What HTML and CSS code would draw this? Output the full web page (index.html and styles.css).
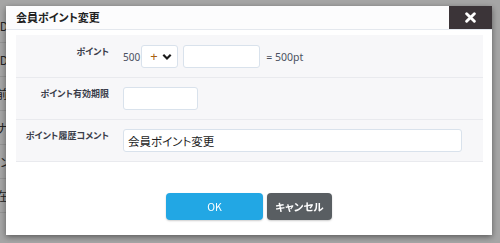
FILE: index.html
```html
<!DOCTYPE html>
<html lang="ja">
<head>
    <meta charset="UTF-8">
    <meta name="viewport" content="width=device-width, initial-scale=1.0">
    <title>会員ポイント変更</title>
    <link rel="stylesheet" href="styles.css">
</head>
<body>
    <!-- page behind the modal, only its left edge shows -->
    <div class="page">
        <div class="page-row">ID</div>
        <div class="page-row">ID</div>
        <div class="page-row">名前</div>
        <div class="page-row">カナ</div>
        <div class="page-row">ポイント</div>
        <div class="page-row">現在</div>
    </div>

    <div class="overlay">
        <div class="modal">
            <div class="modal-header">
                <span class="modal-title">会員ポイント変更</span>
                <button class="close-button" aria-label="閉じる">
                    <svg width="11" height="11" viewBox="0 0 10 10"><path d="M1.5 1.5 L8.5 8.5 M8.5 1.5 L1.5 8.5" stroke="#fff" stroke-width="2.6" stroke-linecap="round"/></svg>
                </button>
            </div>

            <div class="modal-body">
                <div class="form-panel">
                    <div class="form-row">
                        <div class="form-label">ポイント</div>
                        <div class="form-field">
                            <span class="num">500</span>
                            <div class="sign-select">
                                <span class="sign">+</span>
                                <svg width="10" height="8" viewBox="0 0 10 8"><path d="M1.3 1.8 L5 5.5 L8.7 1.8" fill="none" stroke="#1a1a1a" stroke-width="2.2"/></svg>
                            </div>
                            <input class="text-input point-input" type="text">
                            <span class="num result">= 500pt</span>
                        </div>
                    </div>
                    <div class="form-row">
                        <div class="form-label">ポイント有効期限</div>
                        <div class="form-field">
                            <input class="text-input date-input" type="text">
                        </div>
                    </div>
                    <div class="form-row">
                        <div class="form-label">ポイント履歴コメント</div>
                        <div class="form-field">
                            <input class="text-input comment-input" type="text" value="会員ポイント変更">
                        </div>
                    </div>
                </div>
            </div>

            <div class="modal-footer">
                <button class="btn btn-ok">OK</button>
                <button class="btn btn-cancel">キャンセル</button>
            </div>
        </div>
    </div>
</body>
</html>
```

FILE: styles.css
```css
body {
    margin: 0;
    padding: 0;
    height: 243px;
    overflow: hidden;
    background-color: #f6f6f6;
    font-family: "Noto Sans CJK JP", "Noto Sans", sans-serif;
    font-feature-settings: "palt";
    color: #333;
}

.page {
    width: 30px;
    margin-left: -22px;
    padding-top: 9px;
}

.page-row {
    height: 34px;
    line-height: 34px;
    font-size: 12px;
    text-align: right;
    border-bottom: 1px solid #ddd;
    box-sizing: border-box;
    white-space: nowrap;
}

.overlay {
    position: fixed;
    top: 0;
    left: 0;
    right: 0;
    bottom: 0;
    background-color: rgba(0, 0, 0, 0.33);
    padding: 6px 0 0 6px;
}

.modal {
    width: 486px;
    height: 229px;
    background-color: #fff;
    box-shadow: 0 2px 6px rgba(0, 0, 0, 0.45);
    display: flex;
    flex-direction: column;
}

.modal-header {
    height: 23px;
    display: flex;
    align-items: stretch;
    justify-content: space-between;
    background-color: #fcfcfd;
    border-bottom: 1px solid #e4e8ee;
}

.modal-title {
    padding-left: 10px;
    font-size: 11px;
    font-weight: bold;
    line-height: 23px;
    color: #222;
}

.close-button {
    width: 43px;
    border: none;
    padding: 0;
    background-color: #3b3438;
    display: flex;
    align-items: center;
    justify-content: center;
    cursor: pointer;
}

.modal-body {
    padding: 5px 9px 0 10px;
}

.form-panel {
    background-color: #f7f7f9;
}

.form-row {
    display: flex;
    align-items: flex-start;
    padding: 9px 0;
    border-bottom: 1px solid #e9eaee;
}

.form-row:first-child {
    padding-top: 10px;
    padding-bottom: 9px;
}

.form-label {
    width: 93px;
    margin-right: 14px;
    text-align: right;
    font-size: 9px;
    font-weight: bold;
    line-height: 13px;
    color: #3a3d4a;
    white-space: nowrap;
}

.form-field {
    display: flex;
    align-items: center;
    height: 23px;
}

.num {
    font-family: "Noto Sans", sans-serif;
    font-size: 10px;
    color: #4a5060;
}

.sign-select {
    width: 37px;
    height: 23px;
    margin-left: 1px;
    box-sizing: border-box;
    border: 1px solid #d9e2ec;
    border-radius: 3px;
    background-color: #fff;
    display: flex;
    align-items: center;
    padding: 0 5px 0 8px;
    justify-content: space-between;
}

.sign {
    font-family: "Noto Sans", sans-serif;
    font-size: 13px;
    color: #a8600e;
    line-height: 1;
}

.text-input {
    height: 23px;
    box-sizing: border-box;
    border: 1px solid #d9e2ec;
    border-radius: 3px;
    background-color: #fff;
    font-family: "Noto Sans CJK JP", sans-serif;
    font-feature-settings: "palt";
    font-size: 11.5px;
    color: #222;
    padding: 0 4px;
}

.point-input {
    width: 77px;
    margin-left: 5px;
}

.result {
    margin-left: 6px;
    font-size: 10.5px;
}

.date-input {
    width: 75px;
}

.comment-input {
    width: 339px;
}

.modal-footer {
    display: flex;
    justify-content: center;
    gap: 4px;
    padding-top: 31px;
}

.btn {
    height: 27px;
    border: none;
    border-radius: 4px;
    color: #fff;
    font-family: "Noto Sans CJK JP", "Noto Sans", sans-serif;
    font-feature-settings: "palt";
    font-size: 10.5px;
    cursor: pointer;
    box-shadow: 0 1px 2px rgba(0, 0, 0, 0.2);
}

.btn-ok {
    width: 97px;
    background-color: #22a7e4;
}

.btn-cancel {
    width: 65px;
    background-color: #595e62;
    font-weight: bold;
}
```
